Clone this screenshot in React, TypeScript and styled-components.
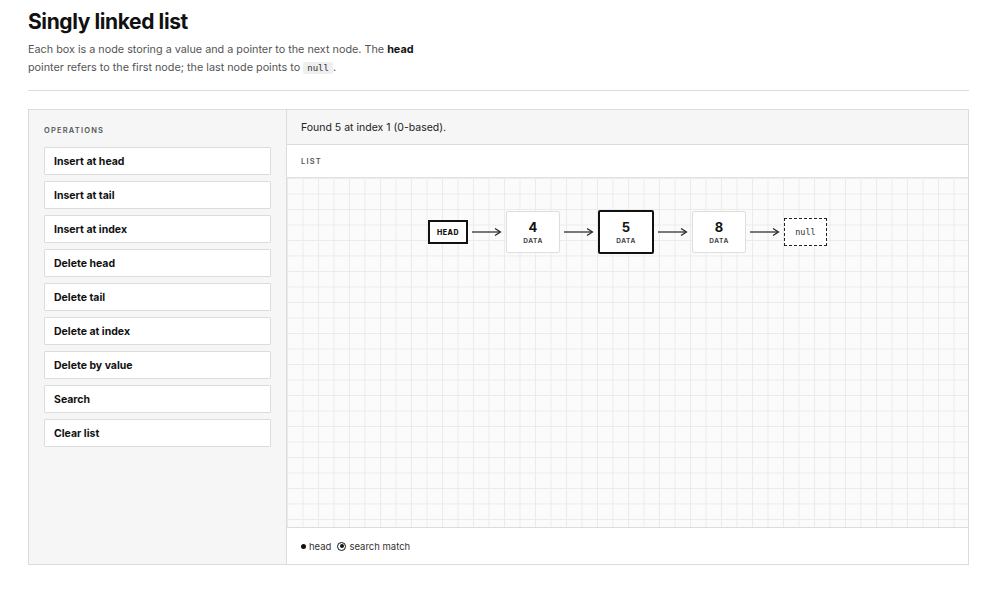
import React from 'react';
import styled, { createGlobalStyle } from 'styled-components';

const GlobalStyle = createGlobalStyle`
  html, body {
    margin: 0;
    padding: 0;
    background: #ffffff;
    font-family: Inter, "Open Sans", sans-serif;
    color: #111;
  }
`;

const Page = styled.main`
  padding: 8px 31px 0 28px;
`;

const Title = styled.h1`
  font-size: 21px;
  font-weight: 700;
  letter-spacing: -0.4px;
  margin: 0 0 5px;
  line-height: 28px;
`;

const Intro = styled.p`
  font-size: 10.8px;
  line-height: 18px;
  color: #555;
  margin: 0;
  max-width: 400px;

  strong {
    color: #111;
    font-weight: 700;
  }
`;

const Code = styled.code`
  font-family: "DejaVu Sans Mono", monospace;
  font-size: 9px;
  background: #efefef;
  border-radius: 2px;
  padding: 1px 4px;
  color: #333;
`;

const Divider = styled.hr`
  border: none;
  border-top: 1px solid #dcdcdc;
  margin: 13px 0 18px;
`;

const Panel = styled.section`
  display: grid;
  grid-template-columns: 258px 1fr;
  height: 456px;
  border: 1px solid #dcdcdc;
  box-sizing: border-box;
`;

const Sidebar = styled.aside`
  background: #f6f6f6;
  border-right: 1px solid #dcdcdc;
  padding: 16px 15px;
  display: flex;
  flex-direction: column;
  gap: 6px;
`;

const SmallLabel = styled.div`
  font-size: 7.5px;
  font-weight: 600;
  letter-spacing: 1.2px;
  text-transform: uppercase;
  color: #555;
`;

const SidebarLabel = styled(SmallLabel)`
  margin-bottom: 6px;
`;

const OpButton = styled.button`
  height: 28px;
  text-align: left;
  background: #fff;
  border: 1px solid #dcdcdc;
  border-radius: 1px;
  padding: 0 9px;
  font-family: Inter, "Open Sans", sans-serif;
  font-size: 10.5px;
  font-weight: 700;
  color: #111;
  cursor: pointer;
`;

const Main = styled.div`
  display: flex;
  flex-direction: column;
  min-width: 0;
`;

const Status = styled.div`
  height: 34px;
  display: flex;
  align-items: center;
  padding: 0 14px;
  background: #f6f6f6;
  border-bottom: 1px solid #dcdcdc;
  font-size: 10.5px;
  color: #222;
`;

const ListHeader = styled.div`
  height: 32px;
  display: flex;
  align-items: center;
  padding: 0 14px;
  border-bottom: 1px solid #e2e2e2;
`;

const Canvas = styled.div`
  flex: 1;
  background-color: #fbfbfb;
  background-image:
    linear-gradient(to right, #ebebeb 1px, transparent 1px),
    linear-gradient(to bottom, #ebebeb 1px, transparent 1px);
  background-size: 15.5px 15.5px;
  display: flex;
  justify-content: center;
  align-items: flex-start;
  padding-top: 32px;
`;

const Chain = styled.div`
  display: flex;
  align-items: center;
`;

const HeadBox = styled.div`
  width: 40px;
  height: 24px;
  box-sizing: border-box;
  border: 2px solid #111;
  background: #fff;
  display: flex;
  align-items: center;
  justify-content: center;
  font-size: 7px;
  font-weight: 800;
  letter-spacing: 0.5px;
`;

const Node = styled.div<{ $match?: boolean }>`
  width: ${p => (p.$match ? 56 : 54)}px;
  height: ${p => (p.$match ? 44 : 42)}px;
  box-sizing: border-box;
  background: #fff;
  border: ${p => (p.$match ? '2px solid #111' : '1px solid #dedede')};
  border-radius: 2px;
  display: flex;
  flex-direction: column;
  align-items: center;
  justify-content: center;
  gap: 3px;
`;

const Value = styled.div`
  font-size: 13px;
  font-weight: 700;
  line-height: 14px;
`;

const Tag = styled.div`
  font-size: 6.5px;
  font-weight: 700;
  letter-spacing: 0.6px;
  color: #444;
`;

const NullBox = styled.div`
  width: 43px;
  height: 28px;
  box-sizing: border-box;
  border: 1.5px dashed #222;
  background: #fff;
  display: flex;
  align-items: center;
  justify-content: center;
  font-family: "DejaVu Sans Mono", monospace;
  font-size: 8.5px;
  color: #333;
`;

const ArrowWrap = styled.svg`
  display: block;
  margin: 0 4px 0 4px;
`;

const Legend = styled.div`
  height: 36px;
  display: flex;
  align-items: center;
  gap: 6px;
  padding: 0 14px;
  border-top: 1px solid #dcdcdc;
  font-size: 9.5px;
  color: #333;
  background: #fff;
`;

const LegendItem = styled.span`
  display: flex;
  align-items: center;
  gap: 3px;
`;

const Dot = styled.span`
  width: 5px;
  height: 5px;
  border-radius: 50%;
  background: #111;
`;

const Ring = styled.span`
  width: 7px;
  height: 7px;
  border-radius: 50%;
  border: 1.5px solid #111;
  display: flex;
  align-items: center;
  justify-content: center;

  &::after {
    content: '';
    width: 4px;
    height: 4px;
    border-radius: 50%;
    background: #111;
  }
`;

const Arrow = () => (
  <ArrowWrap width="30" height="10" viewBox="0 0 30 10">
    <line x1="0" y1="5" x2="28" y2="5" stroke="#222" strokeWidth="1.2" />
    <polyline points="23,1.5 28.5,5 23,8.5" fill="none" stroke="#222" strokeWidth="1.2" />
  </ArrowWrap>
);

const operations = [
  'Insert at head',
  'Insert at tail',
  'Insert at index',
  'Delete head',
  'Delete tail',
  'Delete at index',
  'Delete by value',
  'Search',
  'Clear list',
];

const values = [4, 5, 8];
const matchIndex = 1;

const App: React.FC = () => {
  return (
    <>
      <GlobalStyle />
      <Page>
        <Title>Singly linked list</Title>
        <Intro>
          Each box is a node storing a value and a pointer to the next node. The <strong>head</strong>{' '}
          pointer refers to the first node; the last node points to <Code>null</Code>.
        </Intro>
        <Divider />

        <Panel>
          <Sidebar>
            <SidebarLabel>Operations</SidebarLabel>
            {operations.map(op => (
              <OpButton key={op}>{op}</OpButton>
            ))}
          </Sidebar>

          <Main>
            <Status>Found 5 at index 1 (0-based).</Status>
            <ListHeader>
              <SmallLabel>List</SmallLabel>
            </ListHeader>
            <Canvas>
              <Chain>
                <HeadBox>HEAD</HeadBox>
                <Arrow />
                {values.map((v, i) => (
                  <React.Fragment key={i}>
                    <Node $match={i === matchIndex}>
                      <Value>{v}</Value>
                      <Tag>DATA</Tag>
                    </Node>
                    <Arrow />
                  </React.Fragment>
                ))}
                <NullBox>null</NullBox>
              </Chain>
            </Canvas>
            <Legend>
              <LegendItem>
                <Dot />
                head
              </LegendItem>
              <LegendItem>
                <Ring />
                search match
              </LegendItem>
            </Legend>
          </Main>
        </Panel>
      </Page>
    </>
  );
};

export default App;
